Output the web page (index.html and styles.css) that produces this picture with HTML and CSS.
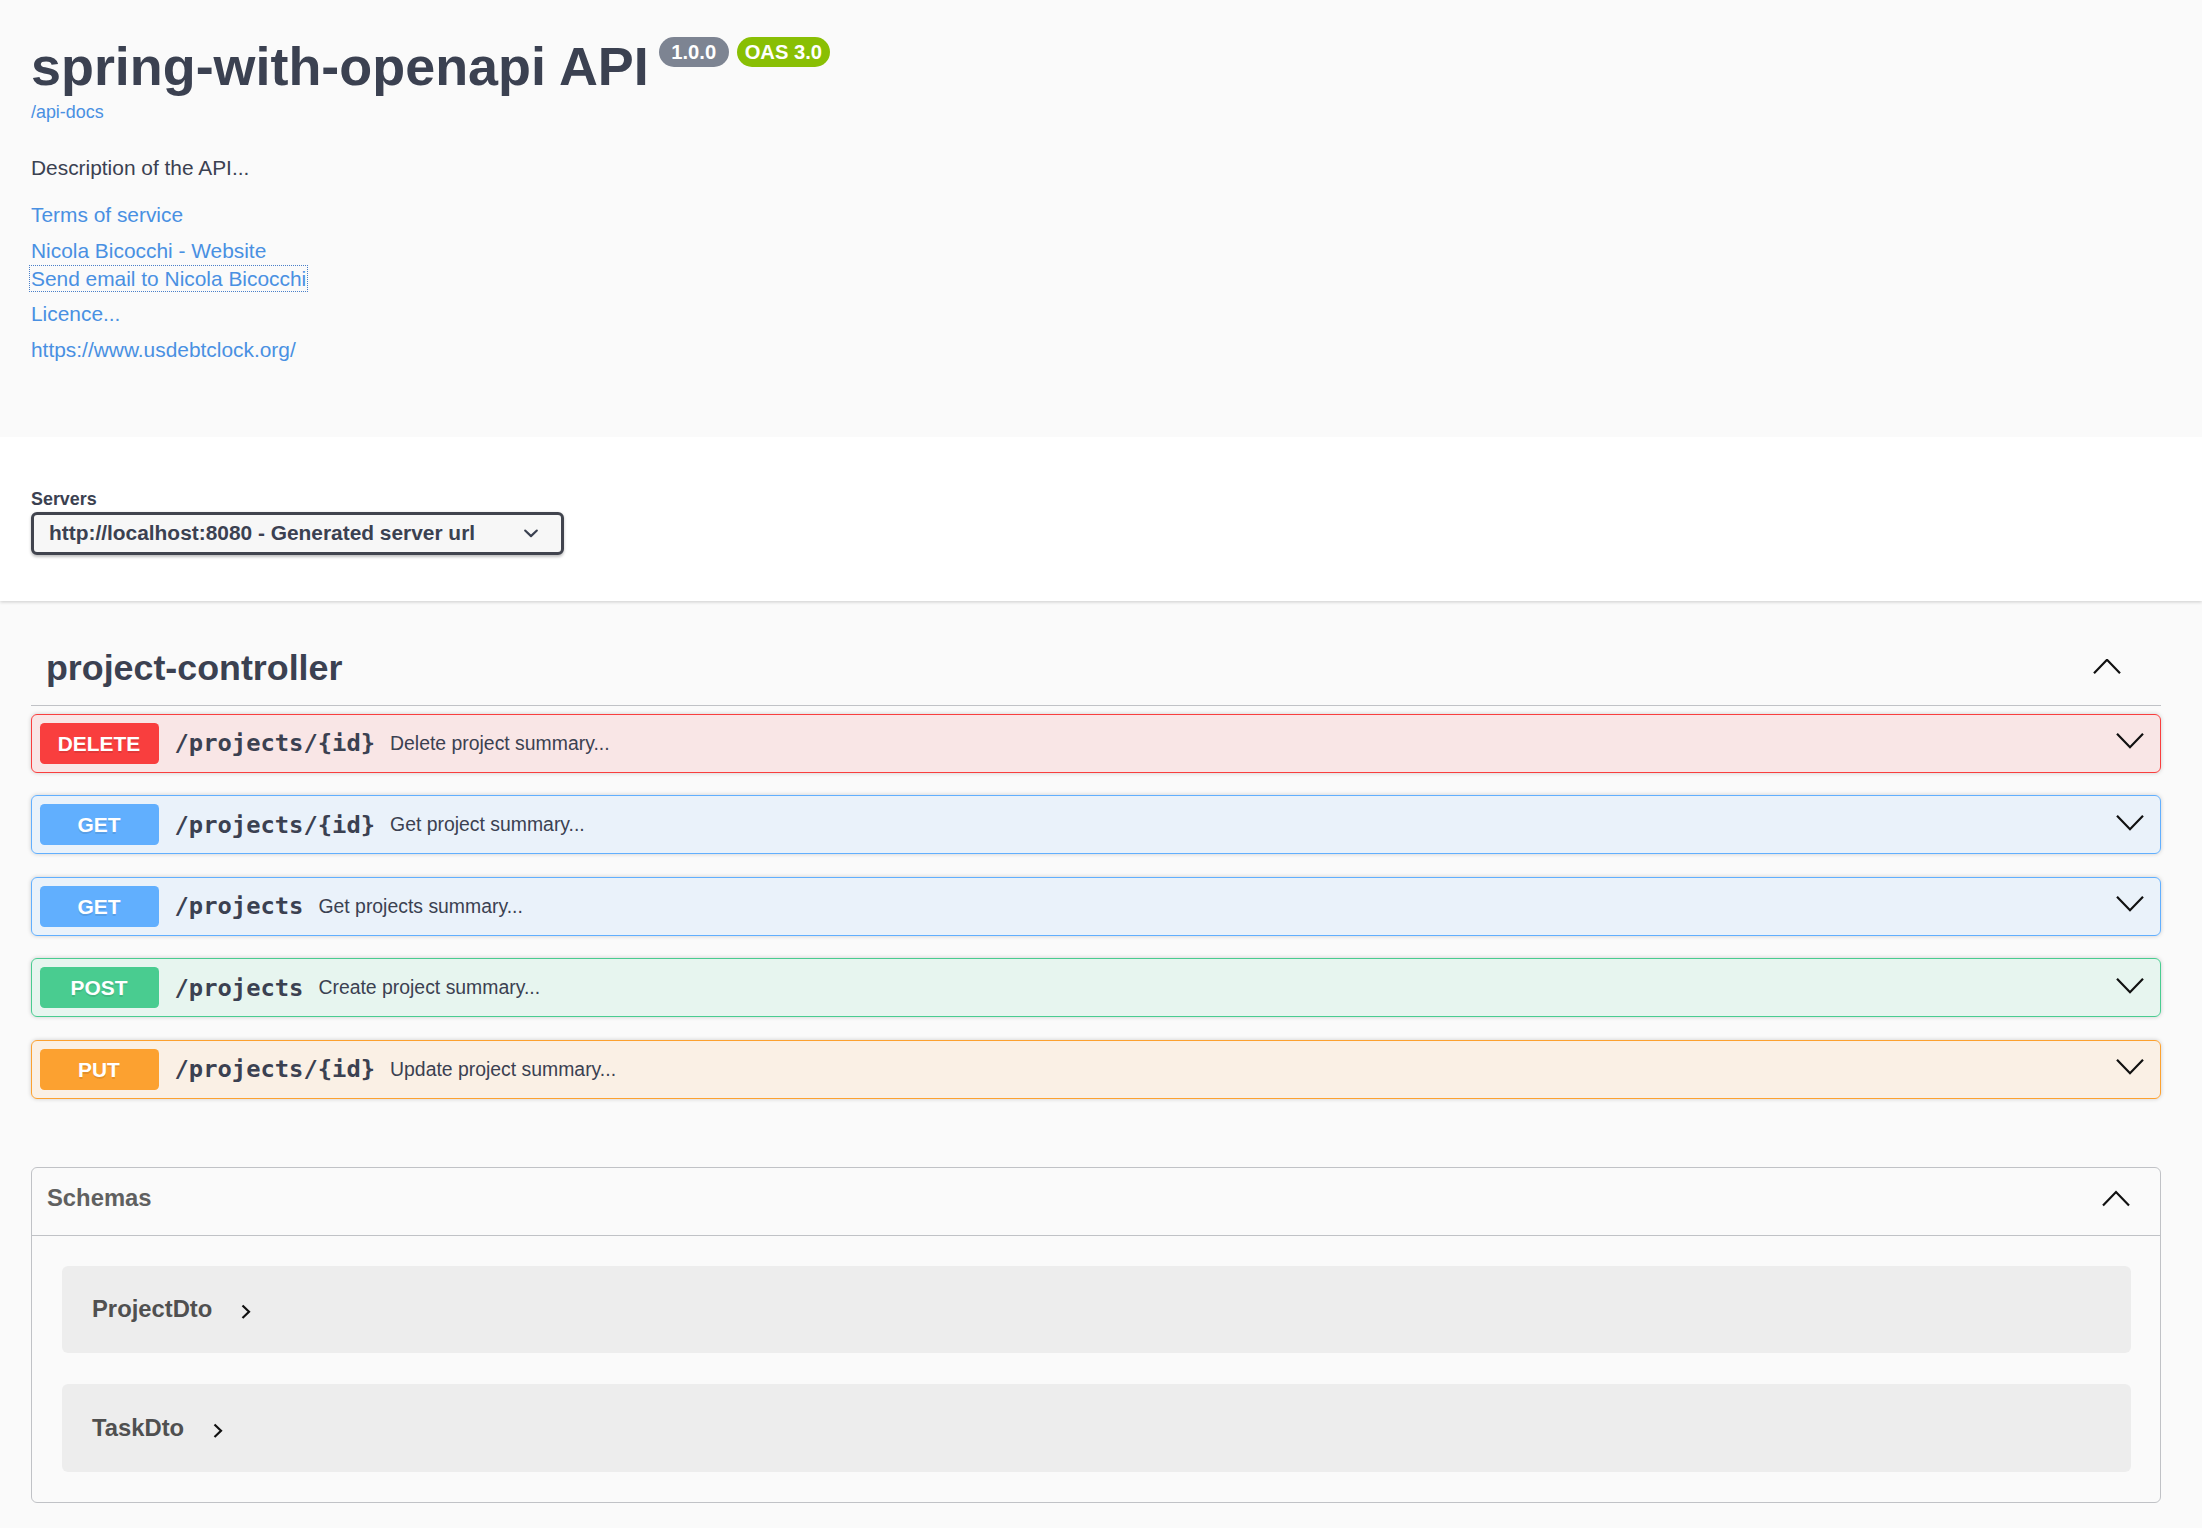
FILE: index.html
```html
<!DOCTYPE html>
<html lang="en">
<head>
<meta charset="utf-8">
<title>Swagger UI</title>
<link rel="stylesheet" href="styles.css">
</head>
<body>
<div class="info-band">
  <div class="wrapper">
    <div class="title-row">
      <h2 class="title">spring-with-openapi API</h2>
      <span class="pill pill-version">1.0.0</span>
      <span class="pill pill-oas">OAS 3.0</span>
    </div>
    <a class="base-url">/api-docs</a>
    <p class="desc">Description of the API...</p>
    <div class="info-line first"><a class="link">Terms of service</a></div>
    <div class="info-line">
      <div><a class="link">Nicola Bicocchi - Website</a></div>
      <div><a class="link focused">Send email to Nicola Bicocchi</a></div>
    </div>
    <div class="info-line"><a class="link">Licence...</a></div>
    <div class="info-line"><a class="link">https://www.usdebtclock.org/</a></div>
  </div>
</div>

<div class="scheme">
  <div class="wrapper">
    <div class="servers-title">Servers</div>
    <div class="select">
      <span>http://localhost:8080 - Generated server url</span>
      <svg class="select-arrow" width="30" height="30" viewBox="0 0 20 20"><path d="M13.418 7.859a.695.695 0 0 1 .978 0 .68.68 0 0 1 0 .969l-3.908 3.83a.697.697 0 0 1-.979 0l-3.908-3.830a.68.68 0 0 1 0-.969.695.695 0 0 1 .978 0L10 11l3.418-3.141z" fill="#3b4151"/></svg>
    </div>
  </div>
</div>

<div class="main">
  <div class="wrapper">
    <h3 class="tag">
      <span class="tag-name">project-controller</span>
      <svg class="tag-arrow" width="28" height="20" viewBox="0 0 28 20"><polyline points="1,14.2 14,0.8 27,14.2" fill="none" stroke="#111" stroke-width="2.2"/></svg>
    </h3>

    <div class="op op-delete">
      <span class="method m-delete">DELETE</span>
      <span class="path">/projects/{id}</span>
      <span class="summary">Delete project summary...</span>
      <svg class="op-arrow" width="28" height="20" viewBox="0 0 28 20"><polyline points="1,0.8 14,14.2 27,0.8" fill="none" stroke="#111" stroke-width="2.2"/></svg>
    </div>
    <div class="op op-get">
      <span class="method m-get">GET</span>
      <span class="path">/projects/{id}</span>
      <span class="summary">Get project summary...</span>
      <svg class="op-arrow" width="28" height="20" viewBox="0 0 28 20"><polyline points="1,0.8 14,14.2 27,0.8" fill="none" stroke="#111" stroke-width="2.2"/></svg>
    </div>
    <div class="op op-get">
      <span class="method m-get">GET</span>
      <span class="path">/projects</span>
      <span class="summary">Get projects summary...</span>
      <svg class="op-arrow" width="28" height="20" viewBox="0 0 28 20"><polyline points="1,0.8 14,14.2 27,0.8" fill="none" stroke="#111" stroke-width="2.2"/></svg>
    </div>
    <div class="op op-post">
      <span class="method m-post">POST</span>
      <span class="path">/projects</span>
      <span class="summary">Create project summary...</span>
      <svg class="op-arrow" width="28" height="20" viewBox="0 0 28 20"><polyline points="1,0.8 14,14.2 27,0.8" fill="none" stroke="#111" stroke-width="2.2"/></svg>
    </div>
    <div class="op op-put">
      <span class="method m-put">PUT</span>
      <span class="path">/projects/{id}</span>
      <span class="summary">Update project summary...</span>
      <svg class="op-arrow" width="28" height="20" viewBox="0 0 28 20"><polyline points="1,0.8 14,14.2 27,0.8" fill="none" stroke="#111" stroke-width="2.2"/></svg>
    </div>

    <section class="models">
      <h4 class="models-head">
        <span>Schemas</span>
        <svg class="models-arrow" width="28" height="20" viewBox="0 0 28 20"><polyline points="1,17.5 14,4 27,17.5" fill="none" stroke="#111" stroke-width="2.2"/></svg>
      </h4>
      <div class="models-body">
        <div class="model">
          <span class="model-title">ProjectDto</span>
          <svg class="model-arrow" width="12" height="20" viewBox="0 0 12 20"><polyline points="2.5,6.5 9,12.8 2.5,19" fill="none" stroke="#111" stroke-width="2.2"/></svg>
        </div>
        <div class="model">
          <span class="model-title">TaskDto</span>
          <svg class="model-arrow" width="12" height="20" viewBox="0 0 12 20"><polyline points="2.5,6.5 9,12.8 2.5,19" fill="none" stroke="#111" stroke-width="2.2"/></svg>
        </div>
      </div>
    </section>
  </div>
</div>
</body>
</html>
```

FILE: styles.css
```css
html, body {
  margin: 0;
  padding: 0;
}
body {
  background: #fafafa;
  font-family: "Liberation Sans", Arial, sans-serif;
  color: #3b4151;
}
.wrapper {
  padding: 0 41px 0 31px;
}

/* ---------- info ---------- */
.info-band {
  height: 437px;
  box-sizing: border-box;
  padding-top: 36px;
}
.title-row {
  display: flex;
  align-items: flex-start;
}
.title {
  margin: 0;
  font-size: 53.9px;
  line-height: 60px;
  font-weight: 700;
  color: #3b4151;
}
.pill {
  margin-top: 1px;
  height: 30px;
  line-height: 30px;
  border-radius: 15px;
  color: #fff;
  font-size: 20.2px;
  font-weight: 700;
}
.pill-version {
  background: #7d8492;
  margin-left: 10px;
  padding: 0 12.5px;
}
.pill-oas {
  background: #89bf04;
  margin-left: 8px;
  padding: 0 8px;
}
.base-url {
  display: block;
  margin-top: 6.3px;
  font-size: 17.9px;
  line-height: 20px;
  color: #4990e2;
}
.desc {
  margin: 31.5px 0 0;
  font-size: 20.9px;
  line-height: 28px;
  color: #3b4151;
}
.info-line {
  margin-top: 7.5px;
  font-size: 20.9px;
  line-height: 28px;
}
.info-line.first {
  margin-top: 19.5px;
}
.link {
  color: #4990e2;
}
.focused {
  outline: 1px dotted #4a7fc8;
  outline-offset: 1px;
}

/* ---------- servers ---------- */
.scheme {
  background: #fff;
  height: 164px;
  box-sizing: border-box;
  padding-top: 51.8px;
  box-shadow: 0 1.5px 3px rgba(0, 0, 0, 0.15);
}
.servers-title {
  font-size: 17.9px;
  line-height: 20px;
  font-weight: 700;
  color: #3b4151;
}
.select {
  margin-top: 3.2px;
  width: 533px;
  height: 43px;
  box-sizing: border-box;
  border: 3px solid #41444e;
  border-radius: 6px;
  background: #f7f7f7;
  box-shadow: 0 1.5px 3px rgba(0, 0, 0, 0.25);
  display: flex;
  align-items: center;
  padding: 0 15px 0 15px;
  font-size: 20.9px;
  font-weight: 700;
  color: #3b4151;
}
.select-arrow {
  margin-left: auto;
}

/* ---------- operations ---------- */
.main {
  padding-top: 30px;
  padding-bottom: 24px;
}
.tag {
  margin: 0 0 7.5px;
  display: flex;
  align-items: center;
  padding: 15px 40px 14px 15px;
  border-bottom: 1.5px solid rgba(59, 65, 81, 0.3);
  font-size: 35.8px;
  line-height: 45px;
  font-weight: 700;
  color: #3b4151;
}
.tag-arrow {
  margin-left: auto;
}
.op {
  display: flex;
  align-items: center;
  height: 59px;
  box-sizing: border-box;
  padding: 7.5px;
  border: 1.5px solid;
  border-radius: 6px;
  margin-bottom: 22.5px;
  box-shadow: 0 0 4.5px rgba(0, 0, 0, 0.19);
}
.op-delete { border-color: #f93e3e; background: rgba(249, 62, 62, 0.1); }
.op-get { border-color: #61affe; background: rgba(97, 175, 254, 0.1); }
.op-post { border-color: #49cc90; background: rgba(73, 204, 144, 0.1); }
.op-put { border-color: #fca130; background: rgba(252, 161, 48, 0.1); }

.method {
  flex: none;
  width: 119px;
  height: 41px;
  line-height: 41px;
  border-radius: 4.5px;
  text-align: center;
  font-size: 20.9px;
  font-weight: 700;
  color: #fff;
  text-shadow: 0 1.5px 0 rgba(0, 0, 0, 0.1);
}
.m-delete { background: #f93e3e; }
.m-get { background: #61affe; }
.m-post { background: #49cc90; }
.m-put { background: #fca130; }

.path {
  padding: 0 15px 0 16px;
  font-family: "DejaVu Sans Mono", monospace;
  font-size: 23.8px;
  font-weight: 700;
  color: #3b4151;
}
.summary {
  font-size: 19.4px;
  color: #3b4151;
}
.op-arrow {
  margin-left: auto;
  margin-right: 9px;
}

/* ---------- schemas ---------- */
.models {
  margin-top: 68px;
  border: 1.5px solid rgba(59, 65, 81, 0.3);
  border-radius: 6px;
}
.models-head {
  margin: 0;
  height: 68px;
  box-sizing: border-box;
  display: flex;
  align-items: center;
  padding: 10px 30.5px 17px 15px;
  border-bottom: 1.5px solid rgba(59, 65, 81, 0.3);
  font-size: 23.8px;
  line-height: 28px;
  font-weight: 700;
  color: #606060;
}
.models-arrow {
  margin-left: auto;
}
.models-body {
  padding: 30px 0;
}
.model {
  margin: 0 29.5px 31px;
  height: 87.5px;
  display: flex;
  align-items: center;
  padding-left: 30.5px;
  background: #ededed;
  border-radius: 6px;
}
.model:last-child {
  margin-bottom: 0;
}
.model-title {
  font-size: 23.8px;
  line-height: 28px;
  font-weight: 700;
  color: #505050;
}
.model-arrow {
  margin-left: 28px;
}
```
